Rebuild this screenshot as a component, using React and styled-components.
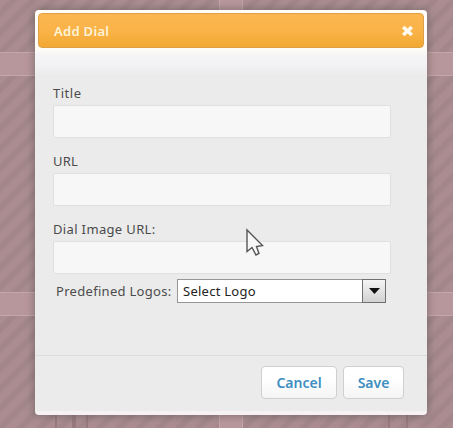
import React, { useState } from "react";
import styled, { createGlobalStyle } from "styled-components";

const GlobalStyle = createGlobalStyle`
  * {
    box-sizing: border-box;
  }
  body {
    margin: 0;
    overflow: hidden;
    font-family: "Noto Sans", "Open Sans", sans-serif;
  }
`;

const Page = styled.div`
  position: relative;
  width: 453px;
  height: 428px;
  overflow: hidden;
  background: #b8979c;
`;
const Dials = styled.div`
  display: grid;
  grid-template-columns: 219px 211px;
  grid-template-rows: 52px 216px 112px;
  gap: 24px;
  height: 100%;
`;
const Dial = styled.div`
  display: flex;
  align-items: flex-end;
  justify-content: ${({ $align }) => $align};
  padding: 0 46px 0 55px;
  background: repeating-linear-gradient(
    135deg,
    #ab8d91 0,
    #ab8d91 5px,
    #a2868a 8px,
    #a2868a 11px,
    #ab8d91 14px
  );
  box-shadow: 0 0 0 1px #c3a8ab;
`;
const DialHandle = styled.div`
  width: ${({ $width }) => $width}px;
  height: 16px;
  border: 2px solid #97797e;
  border-width: 0 2px;
`;
const Dialog = styled.div`
  position: absolute;
  top: 10px;
  left: 35px;
  width: 392px;
  height: 405px;
  display: flex;
  flex-direction: column;
  padding: 3px;
  border-radius: 4px;
  background: linear-gradient(#fffdf6 0, #fffdf6 38px, #f5f4f6 46px, #f2f1f3 56px, #ebebeb 66px);
  border-bottom: 4px solid #f6f1f2;
  box-shadow: 0 0 9px 1px rgba(95, 88, 86, 0.6);
`;
const Header = styled.div`
  flex: none;
  display: flex;
  align-items: center;
  justify-content: space-between;
  height: 35px;
  padding: 1px 9px 0 15px;
  border: 1px solid #dda047;
  border-radius: 4px;
  background: linear-gradient(#fcb650, #f9b348 50%, #f2a832);
`;
const Label = styled.span`
  font-size: ${({ $size }) => $size || 13}px;
  font-weight: ${({ $weight }) => $weight || 400};
  line-height: 20px;
  letter-spacing: ${({ $spacing }) => $spacing || 0}px;
  white-space: nowrap;
  color: ${({ $color }) => $color || "#4b4b4b"};
`;
const CloseButton = styled.button`
  display: flex;
  padding: 0;
  border: none;
  background: none;
`;
const Form = styled.form`
  flex: 1;
  padding: 35px 33px 0 15px;
`;
const Field = styled.div`
  display: flex;
  flex-direction: column;
  height: ${({ $height }) => $height || 68}px;
`;
const Input = styled.input`
  width: 338px;
  height: 33px;
  margin-top: 2px;
  padding: 0 8px;
  border: 1px solid #e0e0e0;
  border-radius: 2px;
  outline: none;
  background: #f7f7f7;
`;
const LogoRow = styled.div`
  display: flex;
  align-items: center;
  justify-content: space-between;
  width: 333px;
  padding-left: 3px;
`;
const Select = styled.div`
  display: flex;
  align-items: center;
  justify-content: space-between;
  width: 209px;
  height: 24px;
  padding-left: 5px;
  border: 1px solid #969696;
  background: #fff;
`;
const SelectArrow = styled.div`
  display: flex;
  align-items: center;
  justify-content: center;
  width: 24px;
  height: 24px;
  margin-right: -1px;
  border: 1px solid #707070;
  background: linear-gradient(#f4f4f4, #d2d2d2);
`;
const Footer = styled.div`
  flex: none;
  display: flex;
  justify-content: flex-end;
  gap: 6px;
  height: 56px;
  margin: 0 -3px -3px;
  padding: 10px 23px 0 0;
  border-top: 1px solid #dcdcdc;
`;
const Button = styled.button`
  width: ${({ $width }) => $width}px;
  height: 33px;
  padding: 0;
  border: 1px solid #cfcfcf;
  border-radius: 4px;
  background: linear-gradient(#fff 40%, #f4f4f5);
  font-family: inherit;
`;
const Pointer = styled.svg`
  position: absolute;
  top: 228px;
  left: 245px;
`;

const App = () => {
  const [title, setTitle] = useState("");
  const [url, setUrl] = useState("");
  const [image, setImage] = useState("");

  return (
    <Page>
      <GlobalStyle />
      <Dials>
        <Dial />
        <Dial />
        <Dial />
        <Dial />
        <Dial $align="flex-start">
          <DialHandle $width={19} />
          <DialHandle $width={14} />
        </Dial>
        <Dial $align="flex-end">
          <DialHandle $width={20} />
        </Dial>
      </Dials>
      <Dialog>
        <Header>
          <Label $weight={600} $spacing={0.3} $color="#fff3d8">Add Dial</Label>
          <CloseButton aria-label="Close">
            <svg width="13" height="12" viewBox="0 0 13 12">
              <path d="M2.2 2L10.8 10M10.8 2L2.2 10" stroke="#fffaf0" strokeWidth="3.6" />
            </svg>
          </CloseButton>
        </Header>
        <Form>
          <Field>
            <Label $spacing={0.5}>Title</Label>
            <Input value={title} onChange={(e) => setTitle(e.target.value)} />
          </Field>
          <Field>
            <Label $spacing={0.2}>URL</Label>
            <Input value={url} onChange={(e) => setUrl(e.target.value)} />
          </Field>
          <Field $height={60}>
            <Label $spacing={0.35}>Dial Image URL:</Label>
            <Input value={image} onChange={(e) => setImage(e.target.value)} />
          </Field>
          <LogoRow>
            <Label $spacing={0.3}>Predefined Logos:</Label>
            <Select>
              <Label $spacing={0.25} $color="#222">Select Logo</Label>
              <SelectArrow>
                <svg width="11" height="6" viewBox="0 0 11 6">
                  <path d="M0 0H11L5.5 6Z" fill="#111" />
                </svg>
              </SelectArrow>
            </Select>
          </LogoRow>
        </Form>
        <Footer>
          <Button $width={76}>
            <Label $size={14} $weight={600} $color="#3d8fc0">Cancel</Label>
          </Button>
          <Button $width={61}>
            <Label $size={14} $weight={600} $color="#3d8fc0">Save</Label>
          </Button>
        </Footer>
      </Dialog>
      <Pointer width="20" height="30" viewBox="0 0 20 30">
        <path
          d="M2 2V23.5L7 19.5L11 27L14 25.5L11.5 18.5L17.5 17.5Z"
          fill="#f7f7f7"
          stroke="#555"
          strokeWidth="1.4"
        />
      </Pointer>
    </Page>
  );
};

export default App;
